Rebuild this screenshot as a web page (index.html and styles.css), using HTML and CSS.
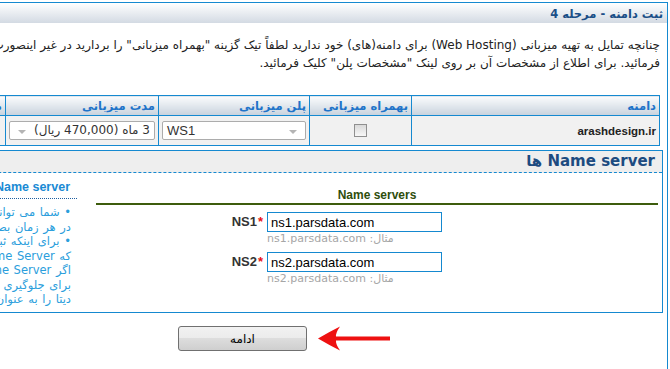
FILE: index.html
```html
<!DOCTYPE html>
<html lang="fa" dir="rtl">
<head>
    <meta charset="UTF-8">
    <title>ثبت دامنه - مرحله 4</title>
    <link rel="stylesheet" href="styles.css">
</head>
<body>
<div class="viewport">
    <div class="frame">
        <div class="frame-head">ثبت دامنه - مرحله 4</div>
        <p class="intro">
            <span class="line">چنانچه تمایل به تهیه میزبانی (Web Hosting) برای دامنه(های) خود ندارید لطفاً تیک گزینه "بهمراه میزبانی" را بردارید در غیر اینصورت بر روی دکمه ادامه کلیک</span>
            <span class="line">فرمائید. برای اطلاع از مشخصات آن بر روی لینک "مشخصات پلن" کلیک فرمائید.</span>
        </p>
        <table class="domains">
            <tr>
                <th class="c-domain">دامنه</th>
                <th class="c-host">بهمراه میزبانی</th>
                <th class="c-plan">پلن میزبانی</th>
                <th class="c-period">مدت میزبانی</th>
                <th class="c-spec">مشخصات پلن</th>
            </tr>
            <tr>
                <td class="domain-name">arashdesign.ir</td>
                <td class="center"><input type="checkbox" class="check"></td>
                <td><span class="select ltr">WS1</span></td>
                <td><span class="select">3 ماه (470,000 ریال)</span></td>
                <td class="center"><a href="#" class="spec-link">مشخصات پلن</a></td>
            </tr>
        </table>

        <div class="ns-box">
            <div class="ns-head">Name server ها</div>
            <div class="ns-body">
                <div class="ns-main">
                    <div class="ns-title">Name servers</div>
                    <div class="ns-form">
                        <label class="ns-label">NS1<span class="req">*</span></label>
                        <div class="ns-field">
                            <input type="text" class="ns-input" value="ns1.parsdata.com">
                            <div class="hint"><span>مثال: ns1.parsdata.com</span></div>
                        </div>
                        <label class="ns-label">NS2<span class="req">*</span></label>
                        <div class="ns-field">
                            <input type="text" class="ns-input" value="ns2.parsdata.com">
                            <div class="hint"><span>مثال: ns2.parsdata.com</span></div>
                        </div>
                    </div>
                </div>
                <div class="ns-help">
                    <div class="help-title">Name server</div>
                    <div class="help-text">
                        <span class="line">• شما می توانید Name Server های دامنه خود را</span>
                        <span class="line">در هر زمان بصورت آنلاین تغییر دهید.</span>
                        <span class="line">• برای اینکه ثبت دامنه با موفقیت انجام شود لازم است</span>
                        <span class="line">که Name Server های وارد شده معتبر باشند.</span>
                        <span class="line">اگر Name Server معتبر ندارید</span>
                        <span class="line">برای جلوگیری از تاخیر، Name Server های پارس</span>
                        <span class="line">دیتا را به عنوان پیش فرض وارد کنید.</span>
                    </div>
                </div>
            </div>
        </div>

        <div class="actions">
            <div class="btn-wrap">
                <button type="button" class="btn">ادامه</button>
                <svg class="arrow" width="76" height="27" viewBox="0 0 76 27">
                    <path d="M2 13.5 Q13 7 24 1.5 Q19.5 8 20 11.5 L74 11.5 L74 15.5 L20 15.5 Q19.5 19 24 25.5 Q13 20 2 13.5 Z" fill="#ee1111"/>
                </svg>
            </div>
        </div>
    </div>
</div>
</body>
</html>
```
FILE: styles.css
```css
* {
    box-sizing: border-box;
}

html, body {
    margin: 0;
    padding: 0;
}
body {
    font-family: "DejaVu Sans", sans-serif;
    font-size: 11px;
    color: #222;
    background: #fff;
    overflow: hidden;
}

.viewport {
    width: 670px;
    height: 369px;
    overflow: hidden;
}

.frame {
    width: 851px;
    height: 420px;
    margin: 2px 2px 0 0;
    border: 1px solid #1589d0;
}

.frame-head {
    height: 20px;
    line-height: 22px;
    padding: 0 4px;
    font-size: 11.5px;
    font-weight: bold;
    color: #1b4f87;
    background: linear-gradient(#ffffff, #d3dae3);
}

.intro {
    margin: 0;
    padding: 13px 7px 0;
    line-height: 18px;
    font-size: 12px;
    white-space: nowrap;
}
.line {
    display: block;
}

.domains {
    width: calc(100% - 14px);
    margin: 23px 7px 0;
    border-collapse: collapse;
    table-layout: fixed;
}
.domains th,
.domains td {
    border: 1px solid #1589d0;
    padding: 0 3px;
    text-align: right;
    white-space: nowrap;
    overflow: hidden;
}
.domains th {
    height: 20px;
    font-size: 11.5px;
    font-weight: bold;
    color: #1f74c9;
    background: linear-gradient(#fbfcfd, #c8d2dd);
}
.domains td {
    height: 30px;
    background: #f1f1f1;
}
.c-domain { width: 248px; }
.c-host { width: 102px; }
.c-plan { width: 151px; }
.c-period { width: 153px; }
.domains td.center {
    text-align: center;
}
.domain-name {
    font-family: "Liberation Sans", sans-serif;
    font-size: 11.5px;
    font-weight: bold;
    color: #222;
}
.check {
    appearance: none;
    width: 13px;
    height: 13px;
    margin: 0;
    vertical-align: middle;
    border: 1px solid #8f8f8f;
    background: linear-gradient(#d9d9d9, #f7f7f7);
}
.select {
    position: relative;
    display: block;
    height: 19px;
    line-height: 17px;
    padding: 0 4px;
    font-size: 12px;
    color: #333;
    background: #fff;
    border: 1px solid #acacac;
    border-radius: 2px;
}
.select.ltr {
    direction: ltr;
    text-align: left;
    font-family: "Liberation Sans", sans-serif;
    font-size: 13px;
}
.select::after {
    content: "";
    position: absolute;
    top: 8px;
    left: 8px;
    border-top: 4px solid #b4b4b4;
    border-left: 4px solid transparent;
    border-right: 4px solid transparent;
}
.select.ltr::after {
    left: auto;
    right: 8px;
}
.spec-link {
    color: #1f74c9;
}

.ns-box {
    margin: 4px 4px 0;
    border: 1px solid #1589d0;
}
.ns-head {
    height: 22px;
    line-height: 21px;
    padding: 0 7px;
    font-size: 15px;
    font-weight: bold;
    color: #1d4b80;
    background: #eeeeee;
    border-bottom: 1px dashed #1589d0;
}
.ns-body {
    display: flex;
    gap: 19px;
    height: 139px;
    padding: 0 4px;
}
.ns-main {
    width: 562px;
    flex-shrink: 0;
}
.ns-title {
    margin-top: 15px;
    line-height: 15px;
    text-align: center;
    font-family: "Liberation Sans", sans-serif;
    font-size: 12px;
    font-weight: bold;
    color: #2e4d0c;
    border-bottom: 2px solid #3d5c0d;
}
.ns-form {
    direction: ltr;
    display: grid;
    grid-template-columns: 80px 304px;
    column-gap: 4px;
    row-gap: 7px;
    justify-content: center;
    margin-top: 7px;
}
.ns-label {
    line-height: 20px;
    text-align: right;
    font-family: "Liberation Sans", sans-serif;
    font-size: 13px;
    font-weight: bold;
    color: #333;
}
.req {
    color: #e81010;
    margin-left: 1px;
}
.ns-input {
    display: block;
    width: 175px;
    height: 20px;
    margin: 0;
    padding: 0 3px;
    border: 1px solid #1589d0;
    font-family: "Liberation Sans", sans-serif;
    font-size: 13px;
    color: #000;
    outline: none;
}
.hint {
    line-height: 13px;
    font-size: 11px;
    color: #a6a6a6;
}
.hint span {
    direction: rtl;
    unicode-bidi: embed;
    display: inline-block;
}

.ns-help {
    flex: 1;
}
.help-title {
    margin-top: 7px;
    line-height: 15px;
    padding: 0 7px 3px;
    font-family: "Liberation Sans", sans-serif;
    font-size: 12.5px;
    font-weight: bold;
    color: #1a8ad4;
    border-bottom: 1px dotted #1f5fa0;
}
.help-text {
    margin-top: 6px;
    padding-right: 6px;
    line-height: 14.5px;
    font-size: 11.5px;
    word-spacing: 1px;
    color: #2a9edc;
    white-space: nowrap;
}

.actions {
    display: flex;
    justify-content: center;
    padding-top: 13px;
}
.btn-wrap {
    position: relative;
}
.btn {
    display: block;
    width: 129px;
    height: 25px;
    margin: 0;
    padding: 0;
    border: 1px solid #707070;
    border-radius: 3px;
    font-family: "DejaVu Sans", sans-serif;
    font-size: 12px;
    color: #000;
    background: linear-gradient(#f2f2f2 0%, #ebebeb 50%, #dddddd 50%, #cfcfcf 100%);
}
.arrow {
    position: absolute;
    left: calc(100% + 9px);
    top: -1px;
}
```
